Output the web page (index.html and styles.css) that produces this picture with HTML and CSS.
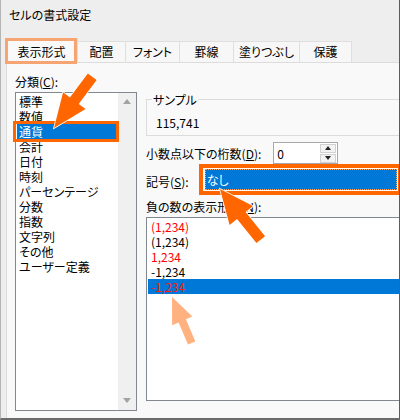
FILE: index.html
```html
<!DOCTYPE html>
<html lang="ja">
<head>
<meta charset="utf-8">
<title>セルの書式設定</title>
<link rel="stylesheet" href="styles.css">
</head>
<body>
<div class="window">
  <div class="titlebar">セルの書式設定</div>
  <div class="tabs">
    <div class="tab active">表示形式</div>
    <div class="tab">配置</div>
    <div class="tab">フォント</div>
    <div class="tab">罫線</div>
    <div class="tab">塗りつぶし</div>
    <div class="tab">保護</div>
  </div>
  <div class="panel">
    <div class="left">
      <div class="label">分類(<u>C</u>):</div>
      <div class="listbox">
        <ul class="items">
          <li>標準</li>
          <li>数値</li>
          <li class="sel mark">通貨</li>
          <li>会計</li>
          <li>日付</li>
          <li>時刻</li>
          <li>パーセンテージ</li>
          <li>分数</li>
          <li>指数</li>
          <li>文字列</li>
          <li>その他</li>
          <li>ユーザー定義</li>
        </ul>
        <div class="scrollbar"><span class="tri up"></span><span class="tri down"></span></div>
      </div>
    </div>
    <div class="right">
      <div class="group">
        <div class="group-title">サンプル</div>
        <div class="sample">115,741</div>
      </div>
      <div class="row decimals">
        <span class="label">小数点以下の桁数(<u>D</u>):</span>
        <div class="spin">
          <span class="spin-val">0</span>
          <div class="spin-btns">
            <span class="spin-btn"><i class="tri-s up"></i></span>
            <span class="spin-btn"><i class="tri-s down"></i></span>
          </div>
        </div>
      </div>
      <div class="row symbol">
        <span class="label sym-label">記号(<u>S</u>):</span>
        <div class="combo"><div class="combo-sel">なし</div></div>
      </div>
      <div class="label neg-label">負の数の表示形式(<u>N</u>):</div>
      <ul class="neglist">
        <li class="red">(1,234)</li>
        <li>(1,234)</li>
        <li class="red">1,234</li>
        <li>-1,234</li>
        <li class="red sel">-1,234</li>
      </ul>
    </div>
  </div>
  <svg class="annot" viewBox="0 0 400 420" width="400" height="420" aria-hidden="true">
    <polygon class="arrow-strong" points="0,0 -34,-14 -34,-5.5 -64,-5.5 -64,5.5 -34,5.5 -34,14" transform="translate(54,128) rotate(126.7)"/>
    <polygon class="arrow-strong" points="0,0 -34,-15 -34,-5.5 -65,-5.5 -65,5.5 -34,5.5 -34,15" transform="translate(220,189) rotate(-128.8)"/>
    <polygon class="arrow-soft" points="0,0 -26,-11 -26,-4 -50,-4 -50,4 -26,4 -26,11" transform="translate(172,297) rotate(-113.2)"/>
  </svg>
</div>
</body>
</html>
```

FILE: styles.css
```css
* { box-sizing: border-box; }
html, body { margin: 0; padding: 0; }
body {
  font-family: "Noto Sans CJK JP", "Noto Sans", sans-serif;
  font-size: 12px;
  line-height: 15px;
  color: #000;
  font-feature-settings: "palt";
  background: #f9f9f9;
}
u { text-underline-offset: 1px; }

.window {
  position: relative;
  width: 400px;
  height: 420px;
  background: #eeeeee;
  border-left: 1px solid #b4b4b4;
  border-right: 1px solid #5c5c5c;
  border-bottom: 2px solid #6b6b6b;
  overflow: hidden;
  display: flex;
  flex-direction: column;
}

.titlebar {
  flex: none;
  height: 30px;
  line-height: 30px;
  padding-left: 8px;
}

.tabs {
  flex: none;
  display: flex;
  align-items: flex-end;
  height: 32px;
  padding-left: 4px;
}
.tab {
  height: 21px;
  line-height: 20px;
  text-align: center;
  border: 1px solid #dfdfdf;
  border-bottom: none;
  margin-right: -1px;
  background: #f7f7f7;
}
.tab:nth-child(1) { width: 73px; }
.tab:nth-child(2) { width: 49px; }
.tab:nth-child(3) { width: 55px; }
.tab:nth-child(4) { width: 55px; }
.tab:nth-child(5) { width: 67px; }
.tab:nth-child(6) { width: 53px; }
.tab.active {
  position: relative;
  z-index: 2;
  height: 25px;
  padding-top: 3px;
  margin-bottom: -1px;
  background: #f9f9f9;
}
.tab.active::after {
  content: "";
  position: absolute;
  left: -1px;
  right: 0;
  top: -1px;
  bottom: -1px;
  border: 3px solid #f6a572;
}

.panel {
  flex: 1;
  margin-left: 5px;
  border-top: 1px solid #dcdcdc;
  border-left: 1px solid #dcdcdc;
  background: #f9f9f9;
  display: flex;
  gap: 9px;
  padding: 11px 0 0 8px;
}

.left { flex: none; width: 122px; }
.listbox {
  display: flex;
  height: 319px;
  margin-top: 3px;
  border: 1px solid #828790;
  background: #fff;
}
.items {
  list-style: none;
  margin: 0;
  padding: 1px 0 0;
  flex: 1;
}
.items li {
  height: 15px;
  line-height: 15px;
  padding-left: 2px;
  margin: 0 2px 0 1px;
  white-space: nowrap;
}
.sel { background: #0078d7; color: #fff; }
.mark { position: relative; }
.mark::after {
  content: "";
  position: absolute;
  left: -4px;
  right: -3px;
  top: -3px;
  bottom: -3px;
  border: 3px solid #ff6600;
}
.scrollbar {
  flex: none;
  width: 18px;
  background: #f0f0f0;
  display: flex;
  flex-direction: column;
  justify-content: space-between;
  align-items: center;
  padding: 6px 0 7px;
}
.tri {
  width: 0;
  height: 0;
  border-left: 4.5px solid transparent;
  border-right: 4.5px solid transparent;
}
.tri.up { border-bottom: 5px solid #a3a3a3; }
.tri.down { border-top: 5px solid #a3a3a3; }

.right { flex: none; width: 262px; padding-top: 25px; }
.group {
  height: 37px;
  border: 1px solid #dcdcdc;
  padding-left: 9px;
}
.group-title {
  width: fit-content;
  margin: -8px 0 0 -4px;
  padding: 0 1px;
  background: #f9f9f9;
}
.sample { margin-top: 8px; }

.row { display: flex; align-items: center; }
.label { white-space: nowrap; }
.decimals { margin-top: 6px; height: 22px; }
.spin {
  flex: none;
  margin-left: 12px;
  width: 65px;
  height: 22px;
  border: 1px solid #a8a8a8;
  background: #fff;
  display: flex;
  align-items: center;
  padding-left: 3px;
}
.spin-val { flex: 1; }
.spin-btns {
  display: flex;
  flex-direction: column;
  gap: 1px;
  margin-right: 1px;
}
.spin-btn {
  width: 16px;
  height: 9px;
  border: 1px solid #d0d0d0;
  background: #f3f3f3;
  display: flex;
  align-items: center;
  justify-content: center;
}
.tri-s {
  width: 0;
  height: 0;
  border-left: 3.5px solid transparent;
  border-right: 3.5px solid transparent;
}
.tri-s.up { border-bottom: 4px solid #222; }
.tri-s.down { border-top: 4px solid #222; }

.symbol { margin-top: 4px; height: 23px; }
.sym-label { padding-top: 3px; }
.combo {
  position: relative;
  flex: none;
  margin-left: 14px;
  width: 195px;
  height: 23px;
  background: #fff;
  padding: 1px 1px 1px 2px;
}
.combo-sel {
  height: 100%;
  background: #0078d7;
  color: #fff;
  border: 1px dotted #f5a86a;
  padding-left: 1px;
  line-height: 19px;
}
.combo::after {
  content: "";
  position: absolute;
  left: -4px;
  right: -4px;
  top: -4px;
  bottom: -4px;
  border: 4px solid #ff6600;
}

.neg-label { margin-top: 8px; }
.neglist {
  list-style: none;
  margin: 3px 0 0;
  padding: 1px 0 0;
  height: 184px;
  border: 1px solid #828790;
  background: #fff;
}
.neglist li {
  height: 15px;
  line-height: 15px;
  padding-left: 3px;
  margin-left: 1px;
}
.red { color: #ff0000; }
.neglist .sel { background: #0078d7; color: #ff1a1a; }

.annot {
  position: absolute;
  left: -1px;
  top: 0;
  pointer-events: none;
}
.arrow-strong {
  fill: #ff6600;
  stroke: #ffffff;
  stroke-width: 1.5;
  paint-order: stroke;
  stroke-linejoin: miter;
}
.arrow-soft { fill: #ffb27f; }
```
